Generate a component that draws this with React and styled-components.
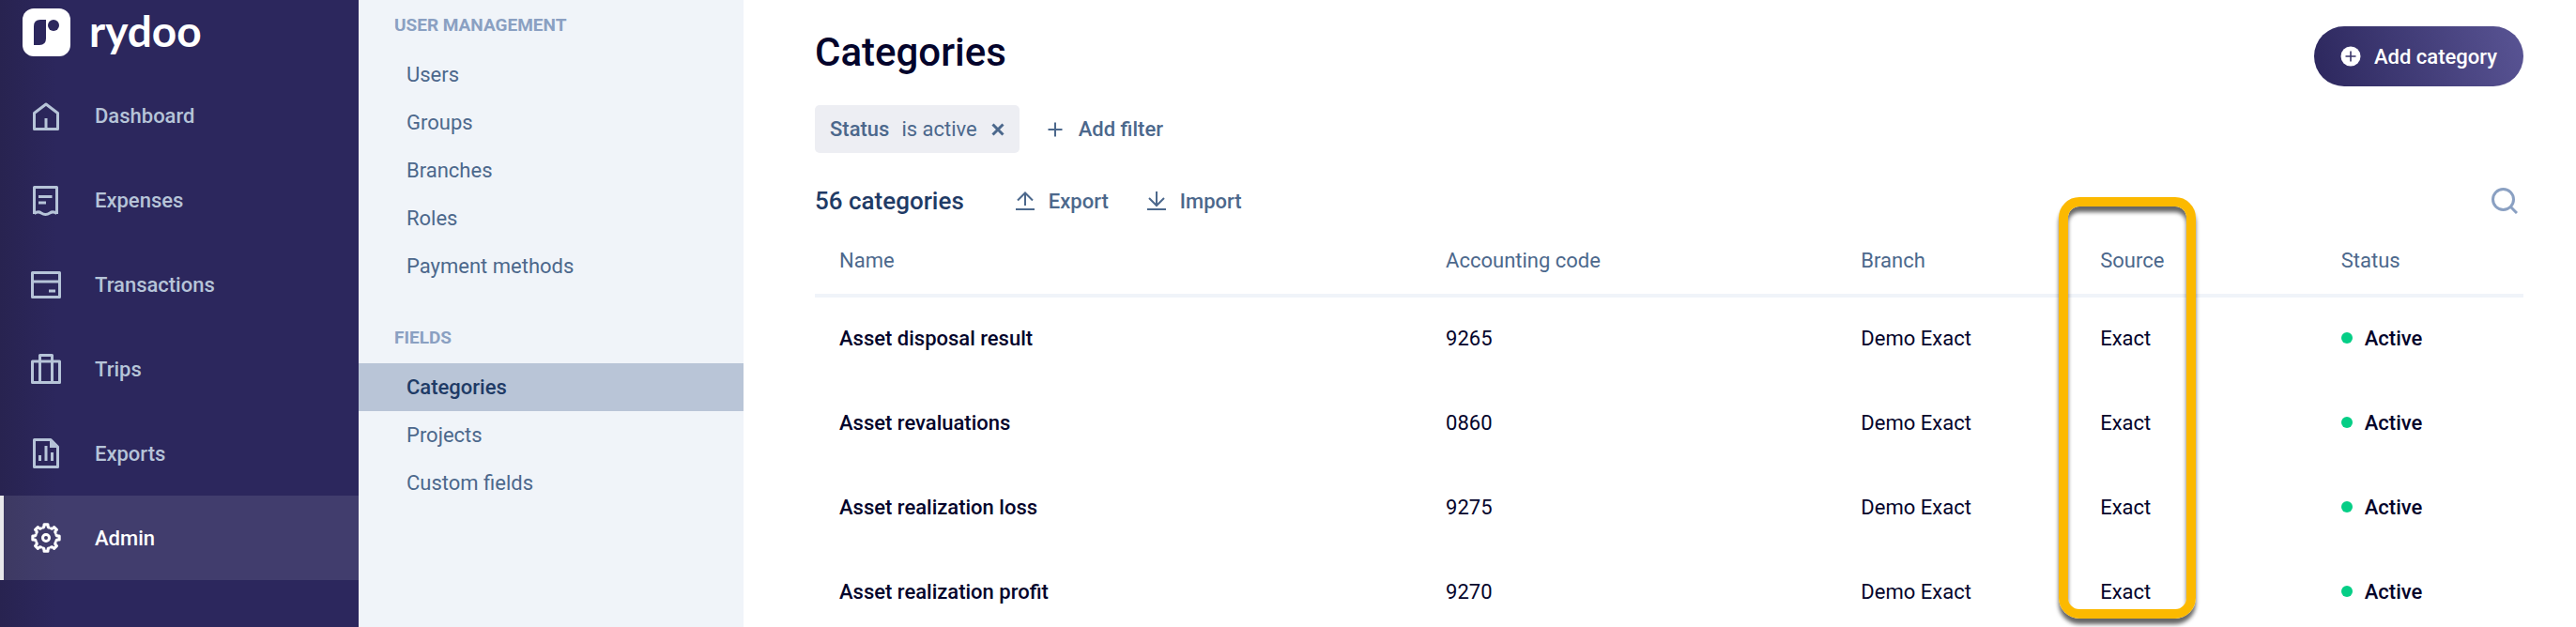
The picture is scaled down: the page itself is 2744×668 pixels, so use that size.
import styled, { createGlobalStyle, css } from 'styled-components';

const HomeIcon = () => (
  <Icon viewBox="0 0 32 32">
    <path d="M16 4 28.5 13.5V30.5H3.5V13.5Z M16 19V30" />
  </Icon>
);

const ReceiptIcon = () => (
  <Icon viewBox="0 0 32 32">
    <path d="M3.5 31V2.5H27.5V31 M3.5 30.5Q7.5 27.5 11 30Q15.5 33 20 30Q23.5 27.5 27.5 30.5" />
    <path d="M8 12.5H22.5M8 19H16" />
  </Icon>
);

const CardIcon = () => (
  <Icon viewBox="0 0 32 32">
    <path d="M1.5 3.5H30.5V29.5H1.5Z M1.5 13H30.5 M19 23H26" />
  </Icon>
);

const SuitcaseIcon = () => (
  <Icon viewBox="0 0 32 32">
    <path d="M1.5 8H30.5V30.5H1.5Z M9.5 30V1.5H22.5V30" />
  </Icon>
);

const ReportIcon = () => (
  <Icon viewBox="0 0 32 32">
    <path d="M3.5 1.5H21L28.5 9V30.5H3.5Z M9.5 18V24 M16 8V24 M22.5 15V24" />
    <path d="M20 2 28 10H20Z" fill="currentColor" stroke="none" />
  </Icon>
);

const GearIcon = () => (
  <Icon viewBox="0 0 32 32">
    {[0, 45, 90, 135, 180, 225, 270, 315].map((angle) => (
      <path
        key={angle}
        transform={`rotate(${angle} 16 16)`}
        d="M11.5 5Q14 5.500 14 3.5V1.8H18V3.5Q18 5.500 20.5 5"
      />
    ))}
    <circle cx="16" cy="16" r="3.5" />
  </Icon>
);

const UploadIcon = () => (
  <SmallIcon viewBox="0 0 20 20">
    <path d="M10 15V2M2 9.5 10 1.5 18 9.5M0 19H20" />
  </SmallIcon>
);

const DownloadIcon = () => (
  <SmallIcon viewBox="0 0 20 20">
    <path d="M10 0V15M2 7 10 15 18 7M0 19H20" />
  </SmallIcon>
);

const mainLinks = [
  { label: 'Dashboard', icon: HomeIcon },
  { label: 'Expenses', icon: ReceiptIcon },
  { label: 'Transactions', icon: CardIcon },
  { label: 'Trips', icon: SuitcaseIcon },
  { label: 'Exports', icon: ReportIcon },
  { label: 'Admin', icon: GearIcon, active: true },
];

const adminSections = [
  {
    title: 'USER MANAGEMENT',
    links: ['Users', 'Groups', 'Branches', 'Roles', 'Payment methods'],
  },
  { title: 'FIELDS', links: ['Categories', 'Projects', 'Custom fields'] },
];

const categories = [
  { name: 'Asset disposal result', code: '9265' },
  { name: 'Asset revaluations', code: '0860' },
  { name: 'Asset realization loss', code: '9275' },
  { name: 'Asset realization profit', code: '9270' },
];

const Logo = () => (
  <Brand href="#">
    <svg width="51" height="51" viewBox="0 0 51 51">
      <rect width="51" height="51" rx="12" fill="#fff" />
      <path d="M19 12H25V32Q25 39 18 39H12V19Q12 12 19 12Z" fill="#2c275d" />
      <circle cx="33" cy="18" r="6" fill="#2c275d" />
    </svg>
    <Wordmark>rydoo</Wordmark>
  </Brand>
);

const Sidebar = () => (
  <MainNav>
    <Logo />
    {mainLinks.map(({ label, icon: LinkIcon, active }) => (
      <MainLink key={label} href="#" $active={active}>
        <LinkIcon />
        {label}
      </MainLink>
    ))}
  </MainNav>
);

const AdminMenu = () => (
  <AdminNav>
    {adminSections.map(({ title, links }) => (
      <Section key={title}>
        <SectionTitle>{title}</SectionTitle>
        {links.map((link) => (
          <AdminLink key={link} href="#" $active={link === 'Categories'}>
            {link}
          </AdminLink>
        ))}
      </Section>
    ))}
  </AdminNav>
);

const CategoryTable = () => (
  <Table>
    <colgroup>
      <Col $share="35.5%" />
      <Col $share="24.3%" />
      <Col $share="14%" />
      <Col $share="14.1%" />
      <Col $share="12.1%" />
    </colgroup>
    <thead>
      <tr>
        <Th>Name</Th>
        <Th>Accounting code</Th>
        <Th>Branch</Th>
        <Th>
          Source
          <Highlight />
        </Th>
        <Th>Status</Th>
      </tr>
    </thead>
    <tbody>
      {categories.map(({ name, code }) => (
        <tr key={code}>
          <Td $strong>{name}</Td>
          <Td>{code}</Td>
          <Td>Demo Exact</Td>
          <Td>Exact</Td>
          <Td $strong>
            <Status>Active</Status>
          </Td>
        </tr>
      ))}
    </tbody>
  </Table>
);

const App = () => (
  <Page>
    <GlobalStyle />
    <Sidebar />
    <AdminMenu />
    <Content>
      <Header>
        <Title>Categories</Title>
        <PrimaryButton>
          <svg width="22" height="22" viewBox="0 0 22 22">
            <circle cx="11" cy="11" r="10.5" fill="#fff" />
            <path
              d="M11 5.5V16.5M5.5 11H16.5"
              stroke="#3a3569"
              strokeWidth="1.6"
            />
          </svg>
          Add category
        </PrimaryButton>
      </Header>
      <Filters>
        <Chip>
          <ChipField>Status</ChipField>
          <span>is active</span>
          <ChipRemove aria-label="Remove filter">
            <svg width="14" height="14" viewBox="0 0 14 14">
              <path
                d="M1.5 1.5 12.5 12.5M12.5 1.5 1.5 12.5"
                stroke="currentColor"
                strokeWidth="3"
              />
            </svg>
          </ChipRemove>
        </Chip>
        <TextButton>
          <SmallIcon viewBox="0 0 20 20">
            <path d="M10 2.5V17.5M2.5 10H17.5" />
          </SmallIcon>
          Add filter
        </TextButton>
      </Filters>
      <Toolbar>
        <Count>56 categories</Count>
        <TextButton>
          <UploadIcon />
          Export
        </TextButton>
        <TextButton>
          <DownloadIcon />
          Import
        </TextButton>
        <SearchButton aria-label="Search">
          <svg width="28" height="28" viewBox="0 0 28 28">
            <circle cx="12.5" cy="12.5" r="11" />
            <path d="M20 20 27 27" />
          </svg>
        </SearchButton>
      </Toolbar>
      <CategoryTable />
    </Content>
  </Page>
);

export default App;

const GlobalStyle = createGlobalStyle`
  * {
    box-sizing: border-box;
  }

  body {
    margin: 0;
    font-family: Roboto, 'Liberation Sans', sans-serif;
    font-size: 22px;
    color: #04042b;
    background: #fff;
  }

  a {
    color: inherit;
    text-decoration: none;
  }

  button {
    display: flex;
    align-items: center;
    padding: 0;
    border: none;
    background: none;
    color: inherit;
    font: inherit;
    cursor: pointer;
  }
`;

const Page = styled.div`
  display: flex;
  height: 100vh;
  overflow: hidden;
`;

const Icon = styled.svg`
  width: 32px;
  height: 32px;
  overflow: visible;
  fill: none;
  stroke: currentColor;
  stroke-width: 3;
  stroke-linejoin: round;
`;

const SmallIcon = styled.svg`
  width: 20px;
  height: 20px;
  fill: none;
  stroke: currentColor;
  stroke-width: 2;
`;

const MainNav = styled.nav`
  flex: 0 0 382px;
  color: #b6c4d8;
  background: linear-gradient(90deg, #282350, #2c275d 60px);
`;

const Brand = styled.a`
  display: flex;
  align-items: center;
  gap: 20px;
  height: 78px;
  padding: 0 24px 9px;
`;

const Wordmark = styled.span`
  padding-bottom: 4px;
  font-family: Lato, sans-serif;
  font-size: 46px;
  font-weight: 700;
  line-height: 52px;
  color: #fff;
`;

const MainLink = styled.a`
  display: flex;
  align-items: center;
  gap: 36px;
  height: 90px;
  padding-left: 33px;
  font-weight: 500;

  ${({ $active }) =>
    $active &&
    css`
      padding-left: 29px;
      border-left: 4px solid #e8e8ea;
      color: #fff;
      background: rgba(255, 255, 255, 0.1);
    `}
`;

const AdminNav = styled.nav`
  flex: 0 0 410px;
  color: #4c688c;
  background: #f0f4f9;
`;

const Section = styled.section`
  margin-bottom: 24px;
`;

const SectionTitle = styled.h2`
  margin: 0;
  padding-left: 38px;
  font-size: 19px;
  line-height: 54px;
  font-weight: 700;
  color: #8aa0c2;
`;

const AdminLink = styled.a`
  display: block;
  padding-left: 51px;
  line-height: 51px;

  ${({ $active }) =>
    $active &&
    css`
      font-weight: 500;
      color: #1f3b66;
      background: #b9c5d7;
    `}
`;

const Content = styled.main`
  flex: 1;
  min-width: 0;
  padding: 28px 56px 0 76px;
`;

const Header = styled.header`
  display: flex;
  align-items: center;
  justify-content: space-between;
  height: 64px;
`;

const Title = styled.h1`
  margin: 0 0 8px;
  font-size: 42px;
  line-height: 48px;
  font-weight: 500;
`;

const PrimaryButton = styled.button`
  && {
    gap: 14px;
    height: 64px;
    padding: 0 28px;
    border-radius: 32px;
    color: #fff;
    font-weight: 500;
    background: linear-gradient(75deg, #2c275d, #595494);
  }
`;

const Filters = styled.div`
  display: flex;
  align-items: center;
  gap: 28px;
  margin-top: 20px;
`;

const Chip = styled.div`
  display: flex;
  align-items: center;
  gap: 13px;
  height: 51px;
  padding: 0 16px;
  border-radius: 5px;
  color: #4c688c;
  background: #edeef3;
`;

const ChipField = styled.span`
  font-weight: 500;
`;

const ChipRemove = styled.button`
  && {
    margin-left: 2px;
  }
`;

const TextButton = styled.button`
  && {
    gap: 15px;
    color: #4c688c;
    font-weight: 500;
  }
`;

const Toolbar = styled.div`
  display: flex;
  align-items: center;
  gap: 41px;
  height: 58px;
  margin: 22px 0 2px;
`;

const Count = styled.span`
  margin-right: 14px;
  font-size: 26px;
  font-weight: 500;
  color: #1f3b66;
`;

const SearchButton = styled.button`
  && {
    margin-left: auto;
    margin-right: 6px;
    color: #8aa0c2;
  }

  svg {
    fill: none;
    stroke: currentColor;
    stroke-width: 3;
  }
`;

const Table = styled.table`
  width: 100%;
  table-layout: fixed;
  border-collapse: separate;
  border-spacing: 0;
`;

const Col = styled.col`
  width: ${({ $share }) => $share};
`;

const Th = styled.th`
  position: relative;
  height: 72px;
  padding: 0 0 4px 26px;
  border-bottom: 4px solid #f0f4f9;
  font-weight: 400;
  text-align: left;
  color: #4c688c;
`;

const Td = styled.td`
  height: 90px;
  padding: 0 0 4px 26px;
  font-weight: ${({ $strong }) => ($strong ? 500 : 400)};
`;

const Status = styled.span`
  display: flex;
  align-items: center;
  gap: 13px;

  &:before {
    content: '';
    width: 12px;
    height: 12px;
    border-radius: 50%;
    background: #05ce86;
  }
`;

const Highlight = styled.div`
  position: absolute;
  top: -35px;
  left: -18px;
  width: 146px;
  height: 449px;
  border: 10px solid #fcb900;
  border-radius: 22px;
  box-shadow:
    0 6px 4px rgba(0, 0, 0, 0.6),
    inset 0 6px 4px rgba(0, 0, 0, 0.6);
  pointer-events: none;
`;
